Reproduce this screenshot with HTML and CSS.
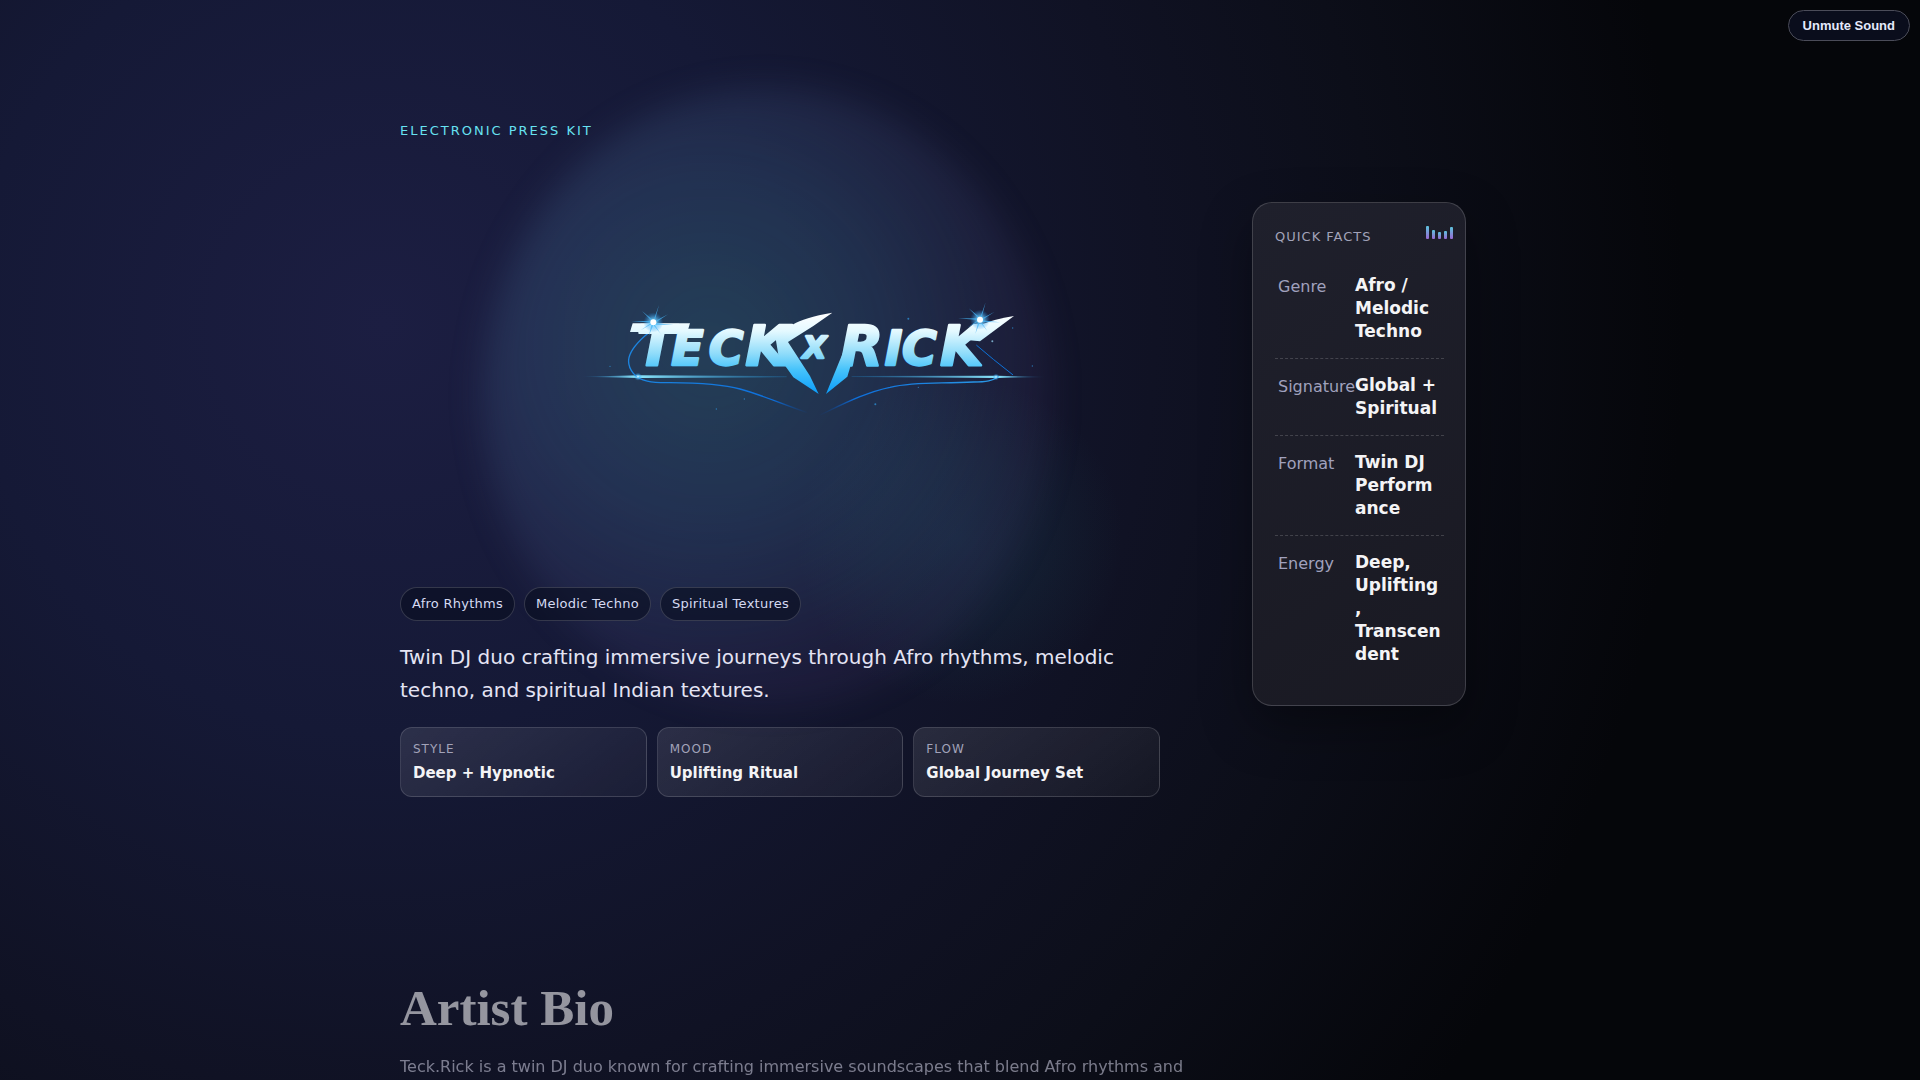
FILE: index.html
```html
<!DOCTYPE html>
<html lang="en">
<head>
<meta charset="utf-8">
<meta name="viewport" content="width=device-width, initial-scale=1">
<title>Teck x Rick – Electronic Press Kit</title>
<link rel="stylesheet" href="styles.css">
</head>
<body>
<button class="sound" type="button">Unmute Sound</button>
<main class="page">
  <section class="hero">
    <div class="intro">
      <div class="orb" aria-hidden="true"></div>
      <div class="orb-small" aria-hidden="true"></div>
      <p class="eyebrow">Electronic Press Kit</p>
      <div class="logo-area">
        <svg class="logo" viewBox="0 0 1440 420" role="img" aria-label="Teck x Rick">
          <defs>
            <linearGradient id="ice" gradientUnits="userSpaceOnUse" x1="0" y1="70" x2="0" y2="312">
              <stop offset="0" stop-color="#ffffff"/>
              <stop offset=".22" stop-color="#e4f9ff"/>
              <stop offset=".5" stop-color="#8fdcfa"/>
              <stop offset=".7" stop-color="#46c3fb"/>
              <stop offset="1" stop-color="#0a9dfb"/>
            </linearGradient>
            <linearGradient id="beam"><stop offset="0" stop-color="#1487d8" stop-opacity="0"/><stop offset=".27" stop-color="#8eeaff"/><stop offset="1" stop-color="#1d9ae8" stop-opacity=".2"/></linearGradient>
            <linearGradient id="beam2"><stop offset="0" stop-color="#1d9ae8" stop-opacity=".2"/><stop offset=".75" stop-color="#8eeaff"/><stop offset="1" stop-color="#1487d8" stop-opacity="0"/></linearGradient>
            <linearGradient id="trail" gradientUnits="userSpaceOnUse" x1="140" y1="0" x2="690" y2="0"><stop offset="0" stop-color="#1c86e0"/><stop offset=".8" stop-color="#0d6fdc"/><stop offset="1" stop-color="#0a3f90" stop-opacity="0"/></linearGradient>
            <linearGradient id="trail2" gradientUnits="userSpaceOnUse" x1="715" y1="0" x2="1260" y2="0"><stop offset="0" stop-color="#0a3f90" stop-opacity="0"/><stop offset=".2" stop-color="#0d6fdc"/><stop offset="1" stop-color="#2c9be8"/></linearGradient>
            <radialGradient id="glow"><stop offset="0" stop-color="#fff"/><stop offset=".3" stop-color="#7ad6ff" stop-opacity=".8"/><stop offset="1" stop-color="#168df0" stop-opacity="0"/></radialGradient>
            <g id="flare">
              <circle r="30" fill="url(#glow)"/>
              <path fill="#45b4f6" d="M0-5 17-52 4-3 44-24 5 2 60 8 4 7 22 34 0 8-14 42-5 5-38 24-6 1-66-4-5-4-34-34-1-7Z" opacity=".75"/>
              <circle r="9" fill="#fff"/>
            </g>
          </defs>
          <path fill="url(#beam)" d="M0 260 180 256 620 258V262L180 264Z"/>
          <path fill="url(#beam2)" d="M815 258 1250 257 1400 261 1250 264 815 261Z"/>
          <g fill="none" stroke-width="4" stroke-linecap="round">
            <path stroke="url(#trail)" d="M206 128C130 190 140 225 160 250C180 274 215 279 270 278C390 279 440 286 480 297C555 318 610 344 680 367"/>
            <path stroke="url(#trail2)" d="M722 374C790 342 860 306 930 292C1010 274 1080 282 1180 276C1220 276 1238 272 1254 260"/>
            <path stroke="#0d72d8" d="M1190 166 1240 208 1298 254" stroke-width="3"/>
          </g>
          <g class="wordmark" fill="url(#ice)" stroke="url(#ice)" stroke-width="7" stroke-linejoin="round">
            <text y="226"><tspan class="cap" x="170">T</tspan><tspan class="low" x="274">E</tspan><tspan class="low" x="386">C</tspan><tspan class="cap" x="496">K</tspan><tspan class="mini" x="668" y="203">X</tspan><tspan class="cap" x="780" y="226">R</tspan><tspan class="low" x="914">I</tspan><tspan class="low" x="966">C</tspan><tspan class="cap" x="1080">K</tspan></text>
            <g stroke="none">
              <path d="M586 140 640 103Q670 83 757 68L700 108 624 156 690 258 716 312 640 262 596 200Z"/>
              <path d="M792 180 826 180 802 260 738 312Z"/>
              <path d="M1160 150 1204 104Q1240 88 1302 78L1200 154Z"/>
              <path d="M158 100H330L322 126H150Z"/>
            </g>
          </g>
          <use href="#flare" x="220" y="97"/>
          <use href="#flare" x="1200" y="89"/>
          <circle cx="174" cy="260" r="12" fill="url(#glow)"/>
          <circle cx="1248" cy="261" r="10" fill="url(#glow)"/>
          <g fill="#2e9be6" opacity=".7">
            <circle cx="1237" cy="154" r="3" fill="#9fe0ff"/><circle cx="1298" cy="114" r="2"/><circle cx="985" cy="86" r="3"/><circle cx="886" cy="343" r="3"/><circle cx="409" cy="357" r="2"/><circle cx="493" cy="327" r="2"/><circle cx="1357" cy="228" r="2"/><circle cx="90" cy="229" r="2"/><circle cx="1015" cy="292" r="2"/>
          </g>
        </svg>
      </div>
      <ul class="chips">
        <li>Afro Rhythms</li>
        <li>Melodic Techno</li>
        <li>Spiritual Textures</li>
      </ul>
      <p class="tagline">Twin DJ duo crafting immersive journeys through Afro rhythms, melodic techno, and spiritual Indian textures.</p>
      <dl class="stats">
        <div><dt>Style</dt><dd>Deep + Hypnotic</dd></div>
        <div><dt>Mood</dt><dd>Uplifting Ritual</dd></div>
        <div><dt>Flow</dt><dd>Global Journey Set</dd></div>
      </dl>
    </div>
    <aside class="facts">
      <div class="equalizer" aria-hidden="true"><i class="b1"></i><i class="b2"></i><i class="b3"></i><i class="b4"></i><i class="b5"></i></div>
      <h2>Quick Facts</h2>
      <dl>
        <div><dt>Genre</dt><dd>Afro / Melodic Techno</dd></div>
        <div><dt>Signature</dt><dd>Global + Spiritual</dd></div>
        <div><dt>Format</dt><dd>Twin DJ Performance</dd></div>
        <div><dt>Energy</dt><dd>Deep, Uplifting, Transcendent</dd></div>
      </dl>
    </aside>
  </section>
  <section class="bio">
    <h2>Artist Bio</h2>
    <p>Teck.Rick is a twin DJ duo known for crafting immersive soundscapes that blend Afro rhythms and</p>
  </section>
</main>
</body>
</html>
```
FILE: styles.css
```css
* { box-sizing: border-box; }

html { background: #05060a; overflow-x: hidden; scrollbar-width: none; }

body {
  margin: 0;
  min-height: 100vh;
  color: #f4f4f6;
  font-family: "DejaVu Sans", sans-serif;
  font-size: 16px;
  background: radial-gradient(circle at 20% 30%, #1c1e42 0%, #151936 24%, #101224 45%, #0c0e19 58%, #05060a 76%);
  background-attachment: fixed;
}

h2, p, dl, dd, ul { margin: 0; padding: 0; }

.sound {
  position: fixed;
  z-index: 5;
  top: 10px;
  right: 10px;
  padding: 7px 14px;
  border: 1px solid #4b4c59;
  border-radius: 16px;
  background: #0a0d1c;
  color: #e4e9fb;
  font: bold 13px/15px "Liberation Sans", sans-serif;
}

.page { max-width: 1120px; margin: 0 auto; }

.hero {
  display: grid;
  grid-template-columns: 760px 1fr;
  gap: 38px;
  align-items: center;
  padding: 121px 0 132px;
}

.intro { position: relative; }
.intro > * { position: relative; }

.intro > .orb,
.intro > .orb-small { position: absolute; border-radius: 50%; }

.intro > .orb {
  left: 82px;
  top: -34px;
  width: 570px;
  height: 620px;
  filter: blur(16px);
  background:
    radial-gradient(circle at 40% 42%, rgba(50, 160, 150, .25) 0%, rgba(50, 130, 150, .18) 35%, transparent 68%),
    linear-gradient(rgba(110, 80, 160, .1), rgba(110, 80, 160, .1));
}

.intro > .orb-small {
  left: 390px;
  top: 250px;
  width: 340px;
  height: 340px;
  background: radial-gradient(circle, rgba(40, 120, 140, .15), rgba(40, 120, 130, .09) 35%, transparent 68%);
}

.eyebrow {
  color: #67e2f2;
  font-size: 13px;
  line-height: 20px;
  letter-spacing: 2px;
  text-transform: uppercase;
}

.logo-area {
  display: flex;
  justify-content: center;
  padding: 149px 0 157px 80px;
}

.logo { width: 480px; height: 140px; }
.wordmark { font-family: "DejaVu Sans", sans-serif; font-weight: bold; font-style: italic; }
.cap { font-size: 168px; }
.low { font-size: 142px; }
.mini { font-size: 92px; }

.chips { display: flex; gap: 9px; list-style: none; }
.chips li {
  padding: 8px 11px;
  border: 1px solid rgba(255, 255, 255, .16);
  border-radius: 17px;
  background: rgba(8, 13, 32, .6);
  color: #d5daf2;
  font-size: 13px;
  line-height: 16px;
  letter-spacing: .02em;
}

.tagline {
  margin-top: 20px;
  color: #e4e4f4;
  font-size: 20px;
  line-height: 33px;
}

.stats {
  display: grid;
  grid-template-columns: repeat(3, 1fr);
  gap: 10px;
  margin-top: 20px;
}
.stats div {
  padding: 12px;
  border: 1px solid rgba(255, 255, 255, .14);
  border-radius: 12px;
  background: linear-gradient(145deg, rgba(255, 255, 255, .1), rgba(255, 255, 255, .03));
}
.stats dt {
  color: #a2a3b9;
  font-size: 12px;
  line-height: 18px;
  letter-spacing: 1px;
  text-transform: uppercase;
}
.stats dd { margin-top: 4px; font-size: 15px; font-weight: bold; line-height: 22px; }

.facts {
  position: relative;
  justify-self: center;
  width: 214px;
  margin-bottom: 10px;
  padding: 23px 21px 24px 22px;
  border: 1px solid rgba(255, 255, 255, .16);
  border-radius: 20px;
  background: linear-gradient(145deg, #1f202c, #191922);
  box-shadow: 0 20px 50px rgba(0, 0, 0, .35);
}
.facts h2 {
  color: #a2a3b9;
  font-size: 13px;
  font-weight: normal;
  line-height: 22px;
  letter-spacing: 1px;
  text-transform: uppercase;
}
.facts dl { margin-top: 11px; }
.facts dl div {
  display: grid;
  grid-template-columns: 77px minmax(0, 1fr);
  padding: 15px 3px;
  border-bottom: 1px dashed rgba(255, 255, 255, .17);
}
.facts dl div:last-child { border-bottom: 0; }
.facts dt { color: #a0a1bd; line-height: 26px; }
.facts dd { font-size: 17px; font-weight: bold; line-height: 23px; overflow-wrap: anywhere; }

.equalizer {
  position: absolute;
  top: 23px;
  right: 12px;
  display: flex;
  align-items: flex-end;
  gap: 3px;
  height: 13px;
}
.equalizer i { width: 3px; border-radius: 1px; background: linear-gradient(#5cc4dc, #9a68d4); }
.b1 { height: 13px; }
.b2 { height: 9px; }
.b3 { height: 7px; }
.b4 { height: 8px; }
.b5 { height: 12px; }

.bio { padding: 49px 0; opacity: .58; }
.bio h2 { font: bold 51px/60px "Liberation Serif", serif; }
.bio p { margin-top: 15px; color: #c9c9dc; line-height: 28px; }
```
